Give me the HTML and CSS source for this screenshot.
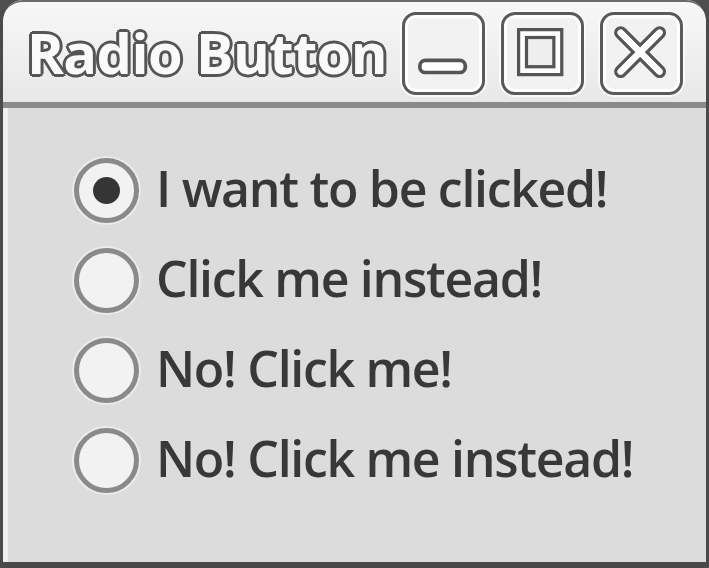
FILE: index.html
```html
<!DOCTYPE html>
<html>
<head>
<meta charset="utf-8">
<link rel="stylesheet" href="styles.css">
</head>
<body>
<div class="window">
  <div class="titlebar">
    <div class="title">Radio Button</div>
    <div class="controls">
      <div class="ctl"><svg viewBox="0 0 83 83" width="83" height="83"><rect x="16" y="49" width="49" height="13" rx="6" fill="#fff" stroke="#555" stroke-width="4"/></svg></div>
      <div class="ctl"><svg viewBox="0 0 83 83" width="83" height="83"><rect x="20" y="20" width="38" height="40" fill="#eee" stroke="#555" stroke-width="12"/><rect x="20" y="20" width="38" height="40" fill="none" stroke="#fff" stroke-width="5"/></svg></div>
      <div class="ctl"><svg viewBox="0 0 83 83" width="83" height="83"><path d="M19 19 L61 61 M61 19 L19 61" stroke="#555" stroke-width="14" stroke-linecap="round"/><path d="M19 19 L61 61 M61 19 L19 61" stroke="#fff" stroke-width="7" stroke-linecap="round"/></svg></div>
    </div>
  </div>
  <div class="body">
    <label class="item"><span class="radio checked"></span><span class="text">I want to be clicked!</span></label>
    <label class="item"><span class="radio"></span><span class="text">Click me instead!</span></label>
    <label class="item"><span class="radio"></span><span class="text">No! Click me!</span></label>
    <label class="item"><span class="radio"></span><span class="text">No! Click me instead!</span></label>
  </div>
</div>
</body>
</html>
```

FILE: styles.css
```css
html, body {
  margin: 0;
  padding: 0;
  background: #4e4e4e;
}
.window {
  width: 709px;
  height: 568px;
  box-sizing: border-box;
  border: 3px solid #4a4a4a;
  border-top-width: 0;
  border-bottom-width: 6px;
  border-radius: 22px 22px 0 0;
  background: #dcdcdc;
  display: flex;
  flex-direction: column;
  overflow: hidden;
  font-family: "Open Sans", "Noto Sans", sans-serif;
}
.titlebar {
  height: 108px;
  flex: none;
  box-sizing: border-box;
  background: linear-gradient(#f7f7f7, #e8e8e8);
  border-top: 2px solid #6a6a6a;
  border-bottom: 6px solid #8a8a8a;
  display: flex;
  align-items: flex-start;
  padding: 0 23px 0 24px;
  border-radius: 20px 20px 0 0;
}
.title {
  font-size: 56px;
  font-weight: bold;
  line-height: 1;
  color: #fafafa;
  letter-spacing: -0.6px;
  text-shadow: -2px -2px 0 #555, 2px -2px 0 #555, -2px 2px 0 #555, 2px 2px 0 #555, 0 3px 0 #555, 0 -3px 0 #555, 3px 0 0 #555, -3px 0 0 #555;
  margin-top: 22px;
}
.controls {
  display: flex;
  gap: 16px;
  margin-left: auto;
  margin-top: 10px;
}
.ctl {
  width: 83px;
  height: 83px;
  box-sizing: border-box;
  border: 3px solid #5a5a5a;
  border-radius: 14px;
  background: #f2f2f2;
  box-shadow: inset 0 0 0 3px #fff, 0 0 0 2px #fafafa;
  display: flex;
}
.ctl svg { display: block; width: 100%; height: 100%; }
.body {
  flex: 1;
  padding: 37px 0 0 66px;
  display: flex;
  flex-direction: column;
  border-left: 5px solid #efefef;
}
.item {
  height: 90px;
  display: flex;
  align-items: center;
  gap: 17px;
}
.radio {
  width: 65px;
  height: 65px;
  border-radius: 50%;
  border: 5px solid #8a8a8a;
  background: #f2f2f2;
  box-sizing: border-box;
  box-shadow: 0 0 0 2px #ececec;
  display: flex;
  align-items: center;
  justify-content: center;
  flex: none;
}
.radio.checked::after {
  content: "";
  width: 27px;
  height: 27px;
  border-radius: 50%;
  background: #353535;
}
.text {
  font-size: 50px;
  font-weight: 600;
  color: #383838;
  letter-spacing: -1.3px;
  line-height: 1;
  margin-top: -4px;
}
```
